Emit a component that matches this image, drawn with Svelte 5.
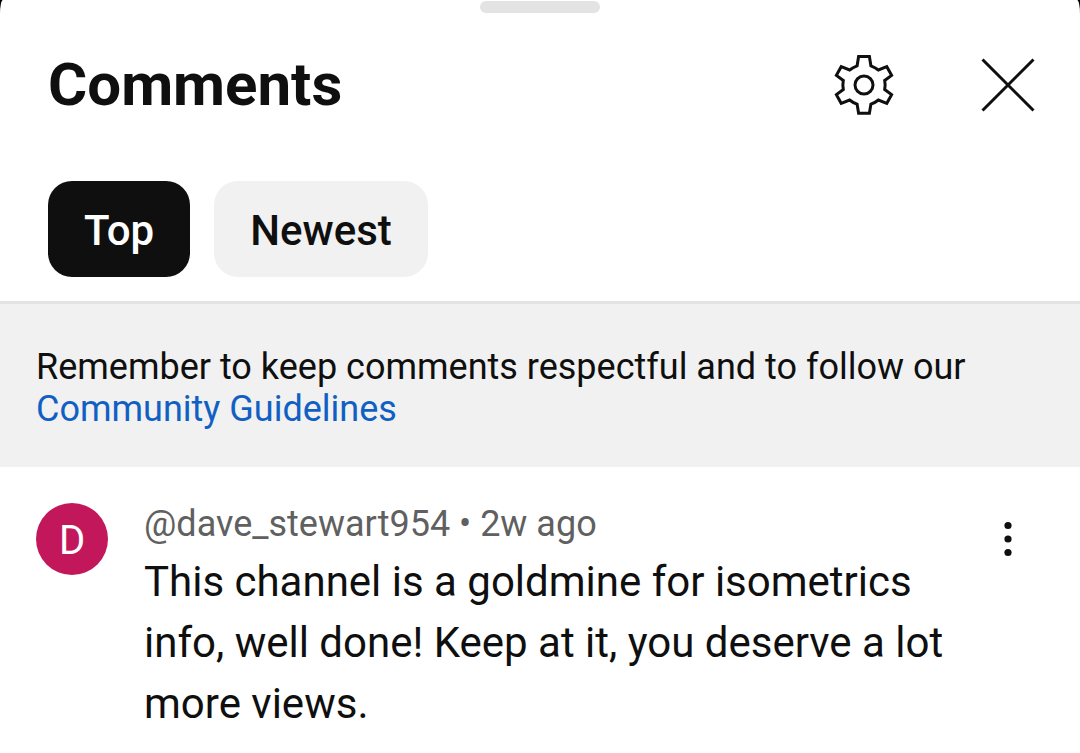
<script>
    let sorts = ['Top', 'Newest'];
    let activeSort = 'Top';

    let comments = [
        {
            initial: 'D',
            author: '@dave_stewart954',
            time: '2w ago',
            text: 'This channel is a goldmine for isometrics info, well done! Keep at it, you deserve a lot more views.'
        }
    ];
</script>

<main class="sheet">
    <div class="handle"></div>

    <header class="header">
        <h1>Comments</h1>
        <div class="actions">
            <button class="icon-button" aria-label="Settings">
                <svg viewBox="0 0 24 24">
                    <path d="M10.2 2.5h3.6l.5 3.1q1.4.5 2.5 1.4l2.8-1.1 1.6 2.9-2.3 1.7q.3 1.5 0 3l2.3 1.7-1.6 2.9-2.8-1.1q-1.1.9-2.5 1.4l-.5 3h-3.6l-.5-3q-1.4-.5-2.5-1.4l-2.8 1.1-1.6-2.9 2.3-1.7q-.3-1.5 0-3l-2.3-1.7 1.6-2.9 2.8 1.1q1.1-.9 2.5-1.4z" />
                    <circle cx="12" cy="12" r="3" />
                </svg>
            </button>
            <button class="icon-button" aria-label="Close">
                <svg viewBox="0 0 24 24">
                    <path d="M3.5 3.5l17 17M20.5 3.5l-17 17" />
                </svg>
            </button>
        </div>
    </header>

    <div class="chips">
        {#each sorts as sort}
            <button class="chip" class:active={sort === activeSort} on:click={() => activeSort = sort}>{sort}</button>
        {/each}
    </div>

    <p class="notice">
        Remember to keep comments respectful and to follow our
        <a href="#guidelines">Community Guidelines</a>
    </p>

    {#each comments as comment}
        <article class="comment">
            <div class="avatar">{comment.initial}</div>
            <div class="body">
                <div class="meta">{comment.author} • {comment.time}</div>
                <p class="text">{comment.text}</p>
            </div>
            <button class="icon-button" aria-label="More options">
                <svg class="dots" viewBox="0 0 24 24">
                    <circle cx="12" cy="7.5" r="1.2" />
                    <circle cx="12" cy="12" r="1.2" />
                    <circle cx="12" cy="16.5" r="1.2" />
                </svg>
            </button>
        </article>
    {/each}
</main>

<style>
    :global(body) {
        background: #000;
    }
    .sheet {
        box-sizing: border-box;
        min-height: 100vh;
        padding-top: 1px;
        background: #fff;
        border-radius: 3px 3px 0 0 / 14px 14px 0 0;
        color: #0f0f0f;
        font-family: Roboto, sans-serif;
    }
    .handle {
        width: 120px;
        height: 12px;
        margin: 0 auto;
        border-radius: 6px;
        background: #e3e3e3;
    }
    .header {
        display: flex;
        align-items: center;
        justify-content: space-between;
        padding: 36px 36px 60px 48px;
    }
    h1 {
        margin: 0;
        font-size: 60px;
        line-height: 72px;
        font-weight: 700;
    }
    .actions {
        display: flex;
        gap: 72px;
    }
    .icon-button {
        flex: none;
        width: 72px;
        height: 72px;
        padding: 0;
        border: 0;
        background: none;
        cursor: pointer;
    }
    svg {
        display: block;
        width: 100%;
        height: 100%;
        fill: none;
        stroke: #0f0f0f;
    }
    .dots {
        fill: #0f0f0f;
        stroke: none;
    }
    .chips {
        display: flex;
        gap: 24px;
        padding: 0 48px 24px;
        border-bottom: 3px solid #e3e3e3;
    }
    .chip {
        height: 96px;
        padding: 2px 36px 0;
        border: 0;
        border-radius: 24px;
        background: #f1f1f1;
        color: #0f0f0f;
        font-family: inherit;
        font-size: 42px;
        font-weight: 500;
        cursor: pointer;
    }
    .chip.active {
        background: #0f0f0f;
        color: #fff;
    }
    .notice {
        margin: 0;
        padding: 42px 36px 37px;
        background: #f1f1f1;
        font-size: 36px;
        line-height: 42px;
    }
    .notice a {
        color: #1060c4;
        text-decoration: none;
    }
    .comment {
        display: flex;
        gap: 36px;
        padding: 36px 36px 0;
    }
    .comment .icon-button {
        margin-left: -36px;
    }
    .avatar {
        flex: none;
        width: 72px;
        height: 72px;
        border-radius: 50%;
        background: #c2185b;
        color: #fff;
        font-size: 40px;
        line-height: 76px;
        text-align: center;
    }
    .body {
        flex: 1;
    }
    .meta {
        color: #606060;
        font-size: 36px;
        line-height: 42px;
    }
    .text {
        margin: 6px 0 0;
        font-size: 42px;
        line-height: 61px;
    }
</style>
